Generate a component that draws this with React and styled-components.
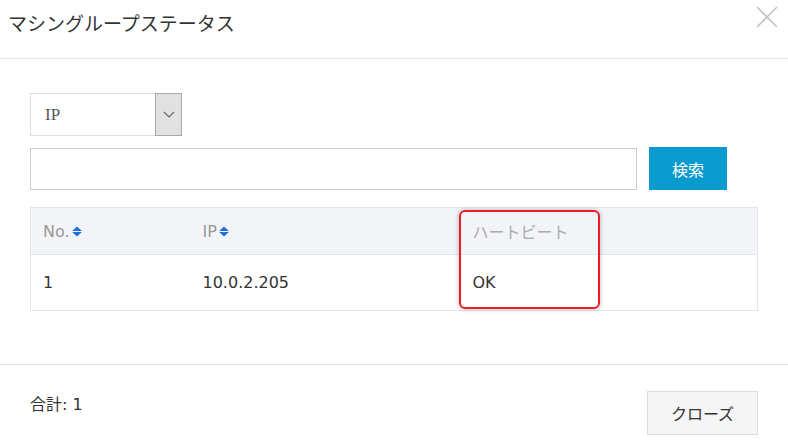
import React from "react";
import styled, { createGlobalStyle } from "styled-components";

const GlobalStyle = createGlobalStyle`
  html, body {
    margin: 0;
    padding: 0;
    background: #fff;
  }
  body {
    font-family: "DejaVu Sans", "Noto Sans CJK JP", sans-serif;
    color: #333;
  }
  * {
    box-sizing: border-box;
  }
`;

const rows = [{ no: 1, ip: "10.0.2.205", heartbeat: "OK" }];

const SortIcon = () => (
  <svg width="10" height="11" viewBox="0 0 10 11">
    <path d="M5 0.5 L9.8 5 L0.2 5 Z" fill="#1f6fd8" />
    <path d="M5 10.5 L9.8 6 L0.2 6 Z" fill="#1f6fd8" />
  </svg>
);

const App = () => {
  return (
    <Dialog>
      <GlobalStyle />
      <Header>
        <Title>マシングループステータス</Title>
        <CloseX aria-label="close">
          <svg width="22" height="22" viewBox="0 0 22 22">
            <path d="M1 1 L21 21 M21 1 L1 21" stroke="#c4c4c4" strokeWidth="1.6" />
          </svg>
        </CloseX>
      </Header>
      <Body>
        <SelectBox>
          <SelectText>IP</SelectText>
          <SelectArrow>
            <svg width="12" height="7" viewBox="0 0 12 7">
              <path d="M1 1 L6 6 L11 1" stroke="#666" strokeWidth="1.1" fill="none" />
            </svg>
          </SelectArrow>
        </SelectBox>
        <SearchRow>
          <SearchInput type="text" />
          <SearchButton>検索</SearchButton>
        </SearchRow>
        <TableWrap>
          <Table>
            <colgroup>
              <col style={{ width: 160 }} />
              <col style={{ width: 270 }} />
              <col />
            </colgroup>
            <thead>
              <tr>
                <Th>
                  <HeadLabel>
                    No.
                    <SortIcon />
                  </HeadLabel>
                </Th>
                <Th>
                  <HeadLabel>
                    IP
                    <SortIcon />
                  </HeadLabel>
                </Th>
                <Th $light>ハートビート</Th>
              </tr>
            </thead>
            <tbody>
              {rows.map((r) => (
                <tr key={r.no}>
                  <Td>{r.no}</Td>
                  <Td>{r.ip}</Td>
                  <Td>{r.heartbeat}</Td>
                </tr>
              ))}
            </tbody>
          </Table>
          <Highlight />
        </TableWrap>
      </Body>
      <Footer>
        <Total>合計: 1</Total>
        <CloseButton>クローズ</CloseButton>
      </Footer>
    </Dialog>
  );
};

const Dialog = styled.div`
  width: 788px;
  height: 444px;
  background: #fff;
  display: flex;
  flex-direction: column;
  overflow: hidden;
`;

const Header = styled.div`
  height: 59px;
  border-bottom: 1px solid #e5e5e5;
  display: flex;
  align-items: flex-start;
  justify-content: space-between;
  padding: 0 10px 0 8px;
`;

const Title = styled.h2`
  margin: 0;
  padding-top: 10px;
  font-family: "Noto Sans CJK JP", sans-serif;
  font-weight: normal;
  font-size: 19px;
  line-height: 26px;
  color: #333;
`;

const CloseX = styled.div`
  margin-top: 6px;
  width: 22px;
  height: 22px;
`;

const Body = styled.div`
  padding: 34px 30px 0 30px;
  height: 306px;
  border-bottom: 1px solid #e5e5e5;
`;

const SelectBox = styled.div`
  width: 152px;
  height: 43px;
  border: 1px solid #ddd;
  display: flex;
  background: #fff;
`;

const SelectText = styled.div`
  flex: 1;
  padding-left: 14px;
  font-family: "Liberation Serif", serif;
  font-size: 17px;
  line-height: 41px;
  color: #555;
`;

const SelectArrow = styled.div`
  width: 27px;
  background: #e1e1e1;
  border: 1px solid #a9a9a9;
  margin: -1px -1px -1px 0;
  display: flex;
  align-items: center;
  justify-content: center;
`;

const SearchRow = styled.div`
  margin-top: 11px;
  display: flex;
  align-items: center;
  gap: 12px;
`;

const SearchInput = styled.input`
  width: 607px;
  height: 42px;
  border: 1px solid #ccc;
  border-radius: 0;
  outline: none;
  padding: 0 10px;
  margin: 1px 0 0 0;
`;

const SearchButton = styled.button`
  width: 78px;
  height: 43px;
  border: none;
  background: #0a9bce;
  color: #fff;
  font-family: "Noto Sans CJK JP", sans-serif;
  font-size: 16px;
  padding: 0;
`;

const TableWrap = styled.div`
  position: relative;
  margin-top: 17px;
  width: 728px;
`;

const Table = styled.table`
  width: 100%;
  border-collapse: collapse;
  table-layout: fixed;
  border: 1px solid #e3e6eb;
`;

const Th = styled.th`
  height: 47px;
  background: #f3f4f8;
  text-align: left;
  font-weight: normal;
  font-size: 16px;
  padding: 0 12px;
  color: ${(p) => (p.$light ? "#aaa" : "#999")};
  border-bottom: 1px solid #e3e6eb;
  font-family: "DejaVu Sans", "Noto Sans CJK JP", sans-serif;
`;

const HeadLabel = styled.span`
  display: inline-flex;
  align-items: center;
  gap: 2px;
`;

const Td = styled.td`
  height: 56px;
  padding: 0 12px;
  font-size: 16px;
  color: #333;
`;

const Highlight = styled.div`
  position: absolute;
  left: 429px;
  top: 3px;
  width: 141px;
  height: 99px;
  border: 2px solid #ec1c24;
  border-radius: 6px;
  box-shadow: 0 0 5px rgba(0, 0, 0, 0.28);
  pointer-events: none;
`;

const Footer = styled.div`
  flex: 1;
  display: flex;
  justify-content: space-between;
  align-items: flex-start;
  padding: 26px 30px 0 30px;
`;

const Total = styled.div`
  padding-top: 3px;
  font-size: 16px;
  line-height: 22px;
  color: #333;
  font-family: "DejaVu Sans", "Noto Sans CJK JP", sans-serif;
`;

const CloseButton = styled.button`
  width: 111px;
  height: 44px;
  background: #f5f5f5;
  border: 1px solid #dcdcdc;
  font-family: "Noto Sans CJK JP", sans-serif;
  font-size: 16px;
  color: #333;
  padding: 0;
`;

export default App;
